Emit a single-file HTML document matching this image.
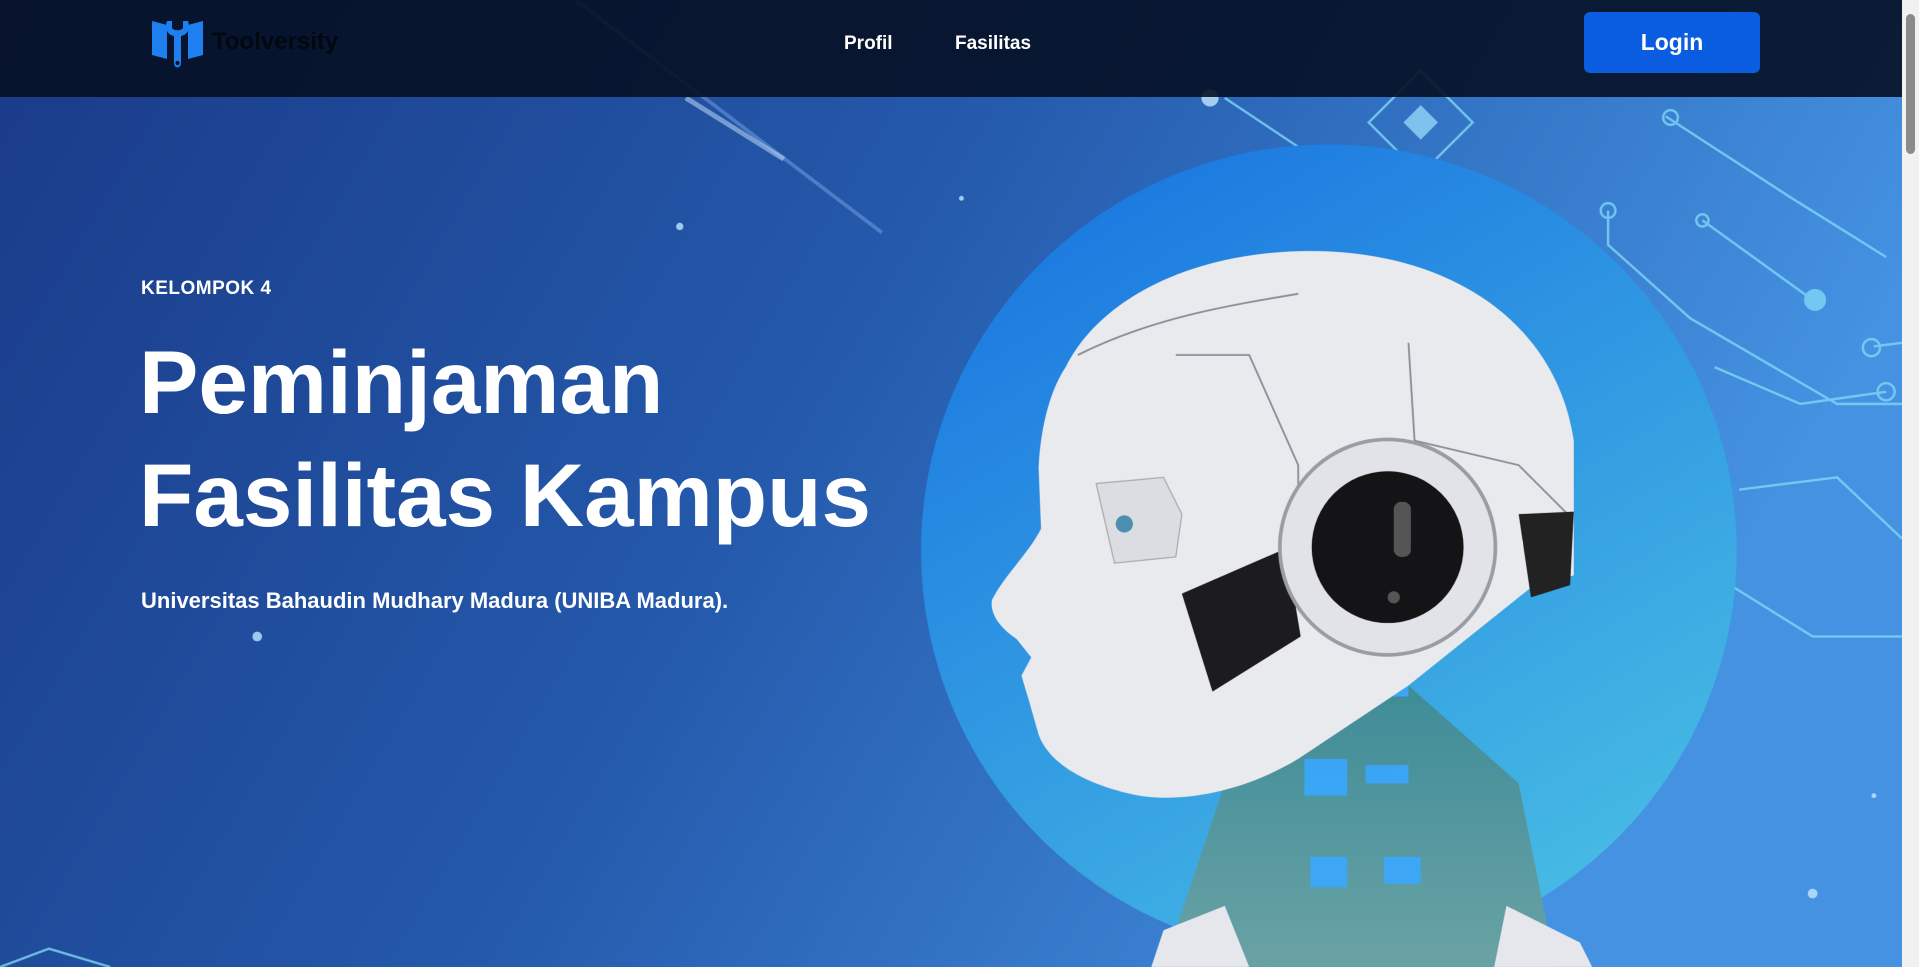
<!DOCTYPE html>
<html><head><meta charset="utf-8"><style>
html,body{margin:0;padding:0;width:1919px;height:967px;overflow:hidden;font-family:"Liberation Sans",sans-serif;}
#bg{position:absolute;left:0;top:0;width:1902px;height:967px}
.nav{position:absolute;left:0;top:0;width:1902px;height:97px;background:rgba(6,16,36,0.9)}
.nav a{position:absolute;top:33px;color:#fff;font-weight:bold;font-size:19px;text-decoration:none}
.login{position:absolute;left:1584px;top:12px;width:176px;height:61px;background:#0a5de0;border-radius:6px;color:#fff;font-weight:bold;font-size:23px;text-align:center;line-height:61px}
.logo{position:absolute;left:212px;top:28px;font-size:24px;font-weight:bold;color:#03070f}
.k{position:absolute;left:141px;top:278px;color:#fff;font-weight:bold;font-size:19px;letter-spacing:0.5px}
h1{position:absolute;left:139px;top:326px;margin:0;color:#fff;font-size:89px;line-height:113px;font-weight:bold;letter-spacing:0}
.sub{position:absolute;left:141px;top:588px;color:#fff;font-size:22px;font-weight:bold}
.sb{position:absolute;right:0;top:0;width:17px;height:967px;background:#f1f1f1}
.sb div{position:absolute;left:4px;top:14px;width:9px;height:140px;background:#8a8a8a;border-radius:5px}
</style></head><body>
<svg id="bg" viewBox="0 0 1553 790" preserveAspectRatio="none">
<defs>
<linearGradient id="g" x1="0" y1="0" x2="1" y2="0.3"><stop offset="0" stop-color="#1a3a88"/><stop offset="0.5" stop-color="#2459ab"/><stop offset="1" stop-color="#4592e2"/></linearGradient>
<linearGradient id="b" x1="0" y1="0" x2="0.6" y2="1"><stop offset="0" stop-color="#1670e0"/><stop offset="1" stop-color="#45b8e4"/></linearGradient>
<linearGradient id="n" x1="0" y1="0" x2="0" y2="1"><stop offset="0" stop-color="#3e8c98"/><stop offset="1" stop-color="#6aa3a5"/></linearGradient>
</defs>
<rect width="1553" height="790" fill="url(#g)"/>
<g stroke="#7fd8f5" stroke-width="2" fill="none" opacity="0.8">
<polyline points="1360,95 1460,160 1540,210"/><circle cx="1364" cy="96" r="6"/>
<polyline points="1390,180 1480,245"/><circle cx="1390" cy="180" r="5"/><circle cx="1482" cy="245" r="8" fill="#7fd8f5"/>
<polyline points="1313,172 1313,200 1380,260 1500,330 1553,330"/><circle cx="1313" cy="172" r="6"/>
<polyline points="1530,283 1553,280"/><circle cx="1528" cy="284" r="7"/>
<polyline points="1400,300 1470,330 1540,320"/><circle cx="1540" cy="320" r="7"/>
<polyline points="1420,400 1500,390 1553,440"/>
<polyline points="1400,470 1480,520 1553,520"/>
<polyline points="1000,80 1060,120 1160,160"/>
<rect x="1130" y="70" width="60" height="60" transform="rotate(45 1160 100)"/>
<polyline points="0,790 40,775 90,790"/>
</g>
<rect x="1150" y="90" width="20" height="20" fill="#9ee4ff" opacity="0.7" transform="rotate(45 1160 100)"/>
<g fill="#bfe9ff" opacity="0.8"><circle cx="988" cy="80" r="7"/><circle cx="555" cy="185" r="3"/><circle cx="210" cy="520" r="4"/><circle cx="1480" cy="730" r="4"/><circle cx="785" cy="162" r="2"/><circle cx="1530" cy="650" r="2"/></g>
<path d="M470 0 L720 190" stroke="#9cc9ff" stroke-width="3" opacity="0.35"/>
<path d="M560 80 L640 130" stroke="#cde6ff" stroke-width="4" opacity="0.5"/>
<ellipse cx="1085" cy="450" rx="333" ry="332" fill="url(#b)"/>
<path d="M1150 560 L1240 640 L1270 790 L950 790 L1000 640 L1030 600 Z" fill="url(#n)"/>
<g fill="#3aa8ff" opacity="0.9"><rect x="1125" y="555" width="25" height="14"/><rect x="1065" y="620" width="35" height="30"/><rect x="1115" y="625" width="35" height="15"/><rect x="1070" y="700" width="30" height="25"/><rect x="1130" y="700" width="30" height="22"/></g>
<path d="M950 760 L1000 740 L1020 790 L940 790 Z M1230 740 L1290 770 L1300 790 L1220 790 Z" fill="#e6e7ec"/>
<path d="M870 300 C900 240 980 205 1070 205 C1180 205 1270 260 1285 360 L1285 470 L1250 480 L1150 560 L1060 620 C1010 650 960 655 930 650 C880 640 855 620 848 600 L840 572 L834 552 L842 537 L830 522 C815 512 808 500 810 490 C820 470 840 452 850 432 L848 382 C850 342 860 315 870 300 Z" fill="#e9eaee"/>
<path d="M880 290 C940 260 1000 250 1060 240 M960 290 L1020 290 L1060 380 L1060 480 M1150 280 L1155 360 L1240 380 L1280 420" stroke="#8b8e96" stroke-width="1.5" fill="none"/>
<path d="M1240 420 L1285 418 L1282 478 L1250 488 Z" fill="#222"/>
<path d="M965 485 L1050 448 L1062 520 L990 565 Z" fill="#1c1c1f"/>
<path d="M895 395 L950 390 L965 420 L960 455 L910 460 Z" fill="#dcdde2" stroke="#aaa"/>
<circle cx="918" cy="428" r="7" fill="#4a8fb0"/>
<circle cx="1133" cy="447" r="88" fill="#e2e3e8" stroke="#9a9ca3" stroke-width="3"/>
<circle cx="1133" cy="447" r="62" fill="#141416"/>
<rect x="1138" y="410" width="14" height="45" rx="6" fill="#555"/>
<circle cx="1138" cy="488" r="5" fill="#555"/>
</svg>
<div class="nav">
<svg style="position:absolute;left:150px;top:15px" width="55" height="55" viewBox="0 0 55 55"><path d="M2 6 L17 10 L17 44 L2 40 Z M53 6 L38 10 L38 44 L53 40 Z" fill="#1e7ff0"/><path d="M17 6 C14 14 18 20 24 21 L24 48 C24 54 31 54 31 48 L31 21 C37 20 41 14 38 6 L33 6 L33 13 C31 16 24 16 22 13 L22 6 Z" fill="#1e7ff0"/><circle cx="27.5" cy="48" r="2" fill="#061024"/></svg>
<div class="logo">Toolversity</div>
<a style="left:844px">Profil</a><a style="left:955px">Fasilitas</a>
<div class="login">Login</div>
</div>
<div class="k">KELOMPOK 4</div>
<h1>Peminjaman<br>Fasilitas Kampus</h1>
<div class="sub">Universitas Bahaudin Mudhary Madura (UNIBA Madura).</div>
<div class="sb"><div></div></div>
</body></html>
